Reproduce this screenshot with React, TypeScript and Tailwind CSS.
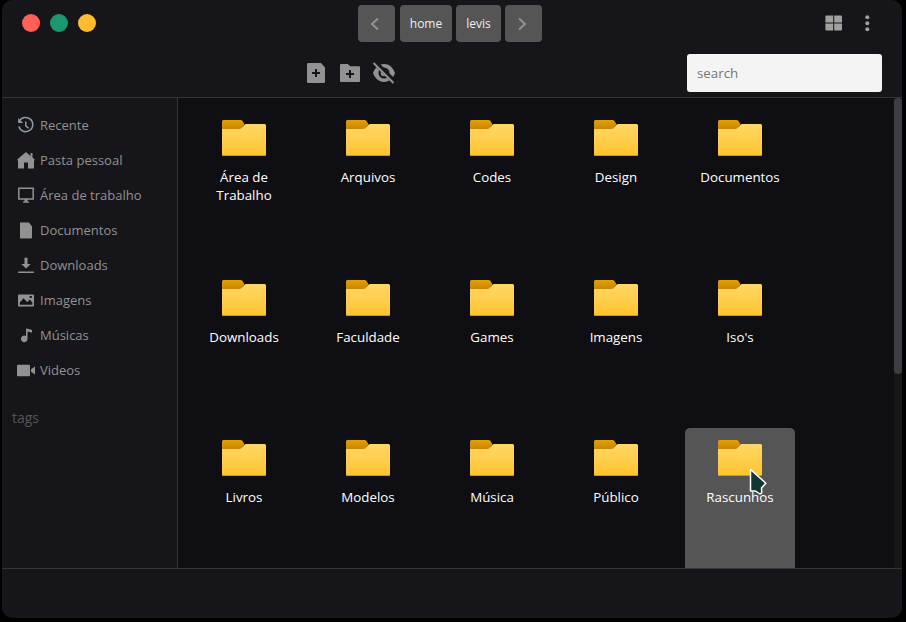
import React from "react";

type IconProps = { children: React.ReactNode; className?: string };

const Glyph = ({ children, className = "size-5" }: IconProps) => (
  <svg viewBox="0 0 20 20" fill="currentColor" className={`shrink-0 ${className}`}>
    {children}
  </svg>
);

const places = [
  {
    name: "Recente",
    icon: (
      <g fill="none" stroke="#8c999b" strokeWidth="1.5">
        <path d="M3.2 6.2A7.1 7.1 0 1 1 2.9 11" />
        <path d="M2.2 2.5v5h5" fill="#8c999b" stroke="none" />
        <path d="M9.8 6v4.4l2.8 2.4" />
      </g>
    ),
  },
  { name: "Pasta pessoal", icon: <path d="M10 1.5 1.5 8.8V10H2v8h6v-6h4v6h6v-8h.5V8.8l-2-1.7V2.5h-2v2.9z" /> },
  {
    name: "Área de trabalho",
    icon: (
      <>
        <path d="M2.8 2.8h14.4v10.6H2.8z" fill="none" stroke="currentColor" strokeWidth="1.5" />
        <path d="M8.5 13.5h3v2.6h-3zM7 16h6v1.3H7z" />
      </>
    ),
  },
  { name: "Documentos", icon: <path d="M4 2h9l3 4v11q0 1-1 1H4z" /> },
  { name: "Downloads", icon: <path d="M8.5 2.2h3v6.3h3.2L10 13 5.3 8.5h3.2zM2.2 16h15.6v1.5H2.2z" /> },
  {
    name: "Imagens",
    icon: <path fillRule="evenodd" d="M3 4h14q1 0 1 1v10q0 1-1 1H3q-1 0-1-1V5q0-1 1-1zm.8 10.3h12.6v-2.2l-2.7-3-2.4 2.7-3.8-4.1-3.7 4.2zM13.6 5.6v2h2.2v-2z" />,
  },
  { name: "Músicas", icon: <path d="M10 3c2 .1 3.6 1.1 6 1.4v2.7c-1.7 0-3-.7-4.500-1v7.100a3.300 3.300 0 1 1-1.500-2.600z" /> },
  { name: "Videos", icon: <path d="M2 4.2h11q1 0 1 1v9.6q0 1-1 1H2q-1 0-1-1V5.2q0-1 1-1zm13 4.600 4-2.800v8l-4-2.800z" /> },
];

const folders = [
  "Área de Trabalho", "Arquivos", "Codes", "Design", "Documentos",
  "Downloads", "Faculdade", "Games", "Imagens", "Iso's",
  "Livros", "Modelos", "Música", "Público", "Rascunhos",
];

const Folder = () => (
  <svg width="44" height="36" viewBox="0 0 44 36" className="shrink-0">
    <defs>
      <linearGradient id="folderBody" x1="0" y1="0" x2="0" y2="1">
        <stop offset="0" stopColor="#ffd767" />
        <stop offset="1" stopColor="#fec42d" />
      </linearGradient>
      <linearGradient id="folderTab" x1="0" y1="0" x2="0" y2="1">
        <stop offset="0" stopColor="#e5a000" />
        <stop offset="1" stopColor="#c98500" />
      </linearGradient>
    </defs>
    <path d="M1.5 0h17q1 0 1.800.7l2.200 3.600L19 9H0V1.500Q0 0 1.500 0z" fill="url(#folderTab)" />
    <path d="M0 9h17.500q1 0 1.800-.8l3.200-3.400q.7-.8 1.700-.8h18.300Q44 4 44 5.500v29q0 1.500-1.500 1.500h-41Q0 36 0 34.500z" fill="url(#folderBody)" />
    <path d="M.5 35.500h43" stroke="#c68d11" strokeWidth=".8" />
  </svg>
);

const navButton = "flex h-[37px] items-center justify-center rounded bg-[#555555]";

export default function App() {
  return (
    <div className="h-[622px] w-[906px] overflow-hidden bg-black pr-1 pb-1 pl-0.5 font-['Open_Sans','Noto_Sans',sans-serif] text-[13px]">
      <div className="flex h-[618px] w-[900px] flex-col overflow-hidden rounded-[10px] bg-[#16151a] text-[#929292]">
        <header className="flex h-[98px] shrink-0 flex-col border-b border-[#353538]">
          <div className="grid h-[47px] grid-cols-3 items-center">
            <div className="flex gap-2.5 pb-[1px] pl-5">
              <i className="size-[18px] rounded-full bg-[#ff5f57]" />
              <i className="size-[18px] rounded-full bg-[#1c9770]" />
              <i className="size-[18px] rounded-full bg-[#ffbd2e]" />
            </div>
            <nav className="flex pl-14 text-xs text-[#eeeeee]">
              <button className={`${navButton} mr-[5px] w-[37px] shrink-0`}>
                <svg width="20" height="20" fill="none" stroke="#929292" strokeWidth="2" className="-translate-x-[1.5px]">
                  <path d="m12.5 4.5-6 5.500 6 5.500" />
                </svg>
              </button>
              <button className={`${navButton} mr-1 w-[52px] shrink-0`}>home</button>
              <button className={`${navButton} mr-1 w-[45px] shrink-0`}>levis</button>
              <button className={`${navButton} w-[37px] shrink-0`}>
                <svg width="20" height="20" fill="none" stroke="#929292" strokeWidth="2" className="-translate-x-[1.5px]">
                  <path d="m6.500 4.500 6 5.500-6 5.500" />
                </svg>
              </button>
            </nav>
            <div className="flex items-center justify-end gap-[13px] pr-[25px] pb-[1px] text-[#a0a0a0]">
              <Glyph>
                <path d="M2.500 2.500h6.700v7H1.400V3.600q0-1.100 1.100-1.100zM10.200 2.500h6.700q1.100 0 1.100 1.100v5.900h-7.800zM1.400 10.500h7.800v7H2.500q-1.100 0-1.100-1.100zM10.200 10.500H18v5.900q0 1.100-1.100 1.100h-6.700z" />
              </Glyph>
              <Glyph>
                <circle cx="10.300" cy="4.300" r="2" />
                <circle cx="10.300" cy="10.300" r="2" />
                <circle cx="10.300" cy="16.300" r="2" />
              </Glyph>
            </div>
          </div>
          <div className="flex h-[50px] items-center justify-between pt-[1px] pr-5 pl-[303px]">
            <div className="flex items-center gap-2.5">
              <svg width="24" height="24" fill="currentColor">
                <path fillRule="evenodd" d="M3.300 2H16l4 4.500v14.200q0 1.300-1.300 1.300H3.300Q2 22 2 20.700V3.300Q2 2 3.300 2zM10 8v3H7v2h3v3h2v-3h3v-2h-3V8z" />
              </svg>
              <svg width="24" height="24" fill="currentColor" className="-ml-px">
                <path fillRule="evenodd" d="M3 3h6.800l2.400 2.200H21q1 0 1 1V20q0 1-1 1H3q-1 0-1-1V4q0-1 1-1zm8 6v3H8v2h3v3h2v-3h3v-2h-3V9z" />
              </svg>
              <svg width="24" height="24" fill="currentColor" className="overflow-visible">
                <path fillRule="evenodd" d="M12 3C7 3 3 6.300 1 12c2 5.500 6 9 11 9s9-3.500 11-9c-2-5.700-6-9-11-9zm0 3.500a5.500 5.500 0 1 1 0 11 5.500 5.500 0 0 1 0-11z" />
                <circle cx="12" cy="12" r="3.300" />
                <path d="M2.800 1.200 22.800 21.200" stroke="#16151a" strokeWidth="5" />
                <path d="m1.500 2 20 20" stroke="currentColor" strokeWidth="2" />
              </svg>
            </div>
            <input
              placeholder="search"
              className="h-[38px] w-[195px] rounded-[3px] bg-[#f4f4f4] px-2.5 text-[13.333px] placeholder:text-[#757575] placeholder:opacity-100"
            />
          </div>
        </header>

        <main className="flex h-[470px] shrink-0">
          <aside className="w-44 shrink-0 border-r border-[#353538] pt-2.5">
            <ul>
              {places.map((place) => (
                <li key={place.name} className="flex h-[35px] items-center gap-1 pl-3.5">
                  <Glyph className="size-5 -translate-y-[0.5px]">{place.icon}</Glyph>
                  <span>{place.name}</span>
                </li>
              ))}
            </ul>
            <h2 className="pt-5 pl-2.5 text-sm leading-5 text-[#555555]">tags</h2>
          </aside>

          <section className="flex flex-1 overflow-hidden bg-[#0f0e13] text-white">
            <ul className="grid h-[490px] w-[624px] auto-rows-[150px] grid-cols-5 gap-y-2.5 pt-2.5 pl-1">
              {folders.map((name) => (
                <li
                  key={name}
                  className={`relative flex w-[110px] flex-col items-center justify-self-center rounded-[5px] pt-3 ${
                    name === "Rascunhos" ? "bg-[#555555]" : ""
                  }`}
                >
                  <Folder />
                  <span className="mt-3 w-[90px] text-center text-[13.333px] leading-[18px]">{name}</span>
                  {name === "Rascunhos" && (
                    <svg width="19" height="28" className="absolute top-[40px] left-[64px]">
                      <path d="M1.500 1.500v21.500h5l4.500 3 1.700-1.200-.2-4.800 4.300-4.800z" fill="#123536" stroke="white" strokeWidth="1.500" strokeLinejoin="round" />
                    </svg>
                  )}
                </li>
              ))}
            </ul>
            <div className="ml-auto w-2 bg-[#161719]">
              <div className="h-[276px] rounded bg-[#3d3d42]" />
            </div>
          </section>
        </main>
        <footer className="flex-1 border-t border-[#353538]" />
      </div>
    </div>
  );
}
